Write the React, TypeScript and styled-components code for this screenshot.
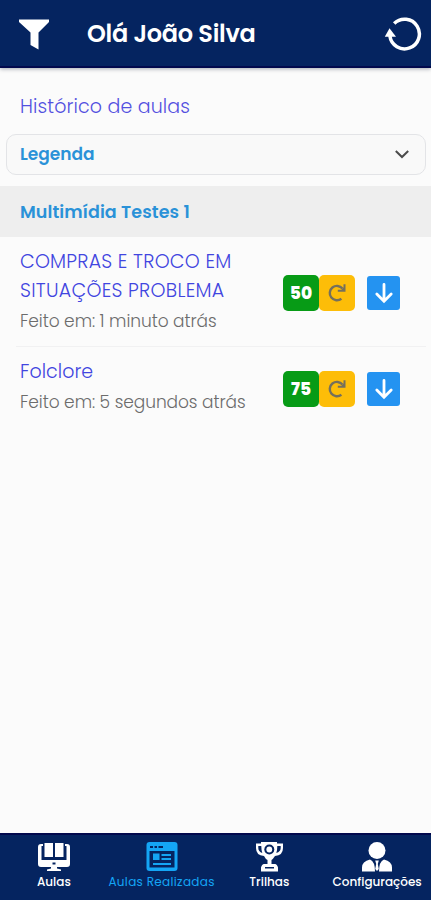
import React from "react";
import styled, { createGlobalStyle } from "styled-components";

const GlobalStyle = createGlobalStyle`
  * { box-sizing: border-box; }
  body { margin: 0; background: #fbfbfb; font-family: Poppins, Inter, sans-serif; }
`;

const Screen = styled.div`
  height: 900px;
  display: flex;
  flex-direction: column;
  overflow: hidden;
`;

const Header = styled.header`
  height: 68px;
  flex: none;
  display: flex;
  align-items: center;
  padding: 2px 9px 0 18px;
  background: #052460;
  border-bottom: 2px solid #02094d;
  box-shadow: 0 1px 4px rgba(0, 20, 40, 0.35);
`;

const Title = styled.h1`
  flex: 1;
  margin: 0 0 0 37px;
  color: #fff;
  font-size: 24px;
  line-height: 36px;
  font-weight: 600;
  letter-spacing: -0.27px;
  white-space: nowrap;
`;

const Main = styled.main`
  flex: 1;
  display: flex;
  flex-direction: column;
`;

const PageTitle = styled.h2`
  margin: 25px 20px 13px;
  color: #5350e0;
  font-size: 19px;
  line-height: 28px;
  font-weight: 300;
  letter-spacing: 0.13px;
`;

const Legend = styled.button`
  height: 41px;
  margin: 0 5px 0 6px;
  padding: 0 15px 2px 13px;
  display: flex;
  align-items: center;
  justify-content: space-between;
  border: 1px solid #e3e4e7;
  border-radius: 10px;
  background: #f9f9f9;
  color: #2a92d8;
  font: inherit;
  font-size: 17px;
  font-weight: 600;
`;

const Group = styled.h3`
  height: 51px;
  margin: 11px 0 0;
  padding-left: 20px;
  background: #eee;
  color: #2a92d8;
  font-size: 17.5px;
  line-height: 52px;
  font-weight: 600;
  letter-spacing: 0.1px;
`;

const Lesson = styled.article<{ $height: number }>`
  height: ${(p) => p.$height}px;
  margin: 0 5px 0 16px;
  padding: 10px 26px 0 4px;
  display: flex;
  justify-content: space-between;
  border-bottom: 1px solid #f1f1f2;
  &:last-child { border-bottom: 0; }
`;

const LessonText = styled.div`
  white-space: nowrap;
`;

const Line = styled.div<{ $track: number }>`
  color: #4145e0;
  font-size: 19px;
  line-height: 29px;
  font-weight: 300;
  letter-spacing: ${(p) => p.$track}px;
`;

const Meta = styled.div`
  margin-top: 2px;
  color: #6c6c6c;
  font-size: 17px;
  line-height: 28px;
  font-weight: 300;
  letter-spacing: -0.06px;
`;

const Actions = styled.div<{ $top: number }>`
  height: 36px;
  margin-top: ${(p) => p.$top}px;
  display: flex;
  align-items: center;
`;

const Badge = styled.div<{ $color: string }>`
  width: 36px;
  height: 36px;
  display: grid;
  place-items: center;
  border-radius: 5px;
  background: ${(p) => p.$color};
  color: #fff;
  font-size: 17px;
  font-weight: 800;
`;

const Download = styled.button`
  width: 33px;
  height: 34px;
  margin-left: 12px;
  padding: 0;
  display: grid;
  place-items: center;
  border: 0;
  border-radius: 3px;
  background: #2493f1;
`;

const Tabs = styled.nav`
  height: 67px;
  flex: none;
  display: grid;
  grid-template-columns: repeat(4, 1fr);
  background: #052460;
  border-top: 2px solid #02094d;
`;

const Tab = styled.div<{ $active?: boolean }>`
  padding-top: 6px;
  display: flex;
  flex-direction: column;
  align-items: center;
  color: ${(p) => (p.$active ? "#14a5f5" : "#fff")};
  font-size: 12px;
  line-height: 18px;
  font-weight: ${(p) => (p.$active ? 400 : 500)};
  letter-spacing: ${(p) => (p.$active ? 0.33 : 0)}px;
  white-space: nowrap;
  svg { flex: none; }
`;

const FunnelIcon = () => (
  <svg width="32" height="32" viewBox="0 0 32 32" fill="#fff">
    <path d="M1 1.500h30v2.500L20.500 14.500v17l-8-4.500V14.500L1 4z" />
  </svg>
);

const ReloadIcon = () => (
  <svg width="38" height="36" viewBox="0 0 38 36">
    <path d="M10.200 7.500A14.800 14.800 0 1 1 5.900 20" fill="none" stroke="#fff" strokeWidth="3.500" />
    <path d="M.800 20.800L5.500 12.300 12 20.800z" fill="#fff" />
  </svg>
);

const ChevronIcon = () => (
  <svg width="16" height="10" viewBox="0 0 16 10" fill="none" stroke="#4b4b4b" strokeWidth="2">
    <path d="M1.800 2L8 8l6.200-6" />
  </svg>
);

const RepeatIcon = () => (
  <svg width="20" height="20" viewBox="0 0 20 20">
    <path d="M14.400 15.800A7.200 7.200 0 1 1 15.500 5.500" fill="none" stroke="#75705c" strokeWidth="2.400" />
    <path d="M18.500 1.300v7.500H10.800V6.800h3.500l2.200-2.200V1.300z" fill="#75705c" />
  </svg>
);

const ArrowIcon = () => (
  <svg width="20" height="22" viewBox="0 0 20 22" fill="none" stroke="#fff" strokeWidth="2.800" strokeLinecap="round">
    <path d="M10 2.500v16.500M2.800 12l7.200 7.200 7.200-7.200" />
  </svg>
);

const ClassesIcon = () => (
  <svg width="34" height="32" viewBox="0 0 34 32" fill="#fff">
    <path d="M1 6q0-3 3-3h2v2H4.500v14h25V5H28V3h2q3 0 3 3v17q0 3-3 3H20v1.500l4 1V30H10v-1.500l4-1V26H4q-3 0-3-3z" />
    <path d="M7.500 2h8.500v14H7.500zM18 2h8.500v14H18z" />
    <rect x="15.500" y="21.500" width="3" height="2" fill="#052460" />
  </svg>
);

const DoneIcon = () => (
  <svg width="34" height="32" viewBox="0 0 34 32">
    <rect x="1.500" y="1" width="31" height="29" rx="3" fill="#14a5f5" />
    <path d="M5 5h3v2H5zM9.500 5h2.500v2H9.500zM13.500 5H18v2h-4.500zM4.500 10h25v16.500H4.500z" fill="#052460" />
    <path d="M8 12.500h6.500v6.500H8zM16.500 13H26v2h-9.500zM16.500 17H26v2h-9.500zM8 22h18v2H8z" fill="#14a5f5" />
  </svg>
);

const TrophyIcon = () => (
  <svg width="34" height="32" viewBox="0 0 34 32">
    <path
      d="M9 1h16v1.500h6v4.500q0 7.500-8 8-2 3-3.500 4v4H23q2 0 3 3.500V30.500H9V26.500q1-3.500 3-3.500h3.500v-4q-2-1-3.500-4-8-.500-8-8V2.500h5z"
      fill="#fff"
    />
    <path d="M6.300 5H9.300q0 4 1 7-4-1.500-4-5zM28.700 5H25.300q0 4-1 7 4.400-1.500 4.400-5zM13 26h9v1.500h-9z" fill="#052460" />
    <circle cx="17.300" cy="8.500" r="5" fill="#052460" />
    <circle cx="17.300" cy="8.500" r="2.900" fill="#fff" />
  </svg>
);

const ProfileIcon = () => (
  <svg width="34" height="32" viewBox="0 0 34 32" fill="#fff">
    <circle cx="17" cy="9.500" r="8.500" />
    <path d="M10 18.500q5 2 5 12H2v-4q0-6 8-8zM24 18.500q-5 2-5 12h13v-4q0-6-8-8zM15.200 19.500h3.600l-1 3.500 1 5-1.800 2-1.800-2 1-5z" />
  </svg>
);

function LessonActions({ score, top }: { score: number; top: number }) {
  return (
    <Actions $top={top}>
      <Badge $color="#079b16">{score}</Badge>
      <Badge $color="#fdbd08"><RepeatIcon /></Badge>
      <Download aria-label="Baixar"><ArrowIcon /></Download>
    </Actions>
  );
}

export default function App() {
  return (
    <Screen>
      <GlobalStyle />
      <Header>
        <FunnelIcon />
        <Title>Olá João Silva</Title>
        <ReloadIcon />
      </Header>
      <Main>
        <PageTitle>Histórico de aulas</PageTitle>
        <Legend>Legenda<ChevronIcon /></Legend>
        <Group>Multimídia Testes 1</Group>
        <Lesson $height={110}>
          <LessonText>
            <Line $track={0.24}>COMPRAS E TROCO EM</Line>
            <Line $track={0.28}>SITUAÇÕES PROBLEMA</Line>
            <Meta>Feito em: 1 minuto atrás</Meta>
          </LessonText>
          <LessonActions score={50} top={28} />
        </Lesson>
        <Lesson $height={86}>
          <LessonText>
            <Line $track={0.05}>Folclore</Line>
            <Meta>Feito em: 5 segundos atrás</Meta>
          </LessonText>
          <LessonActions score={75} top={14} />
        </Lesson>
      </Main>
      <Tabs>
        <Tab><ClassesIcon />Aulas</Tab>
        <Tab $active><DoneIcon />Aulas Realizadas</Tab>
        <Tab><TrophyIcon />Trilhas</Tab>
        <Tab><ProfileIcon />Configurações</Tab>
      </Tabs>
    </Screen>
  );
}
